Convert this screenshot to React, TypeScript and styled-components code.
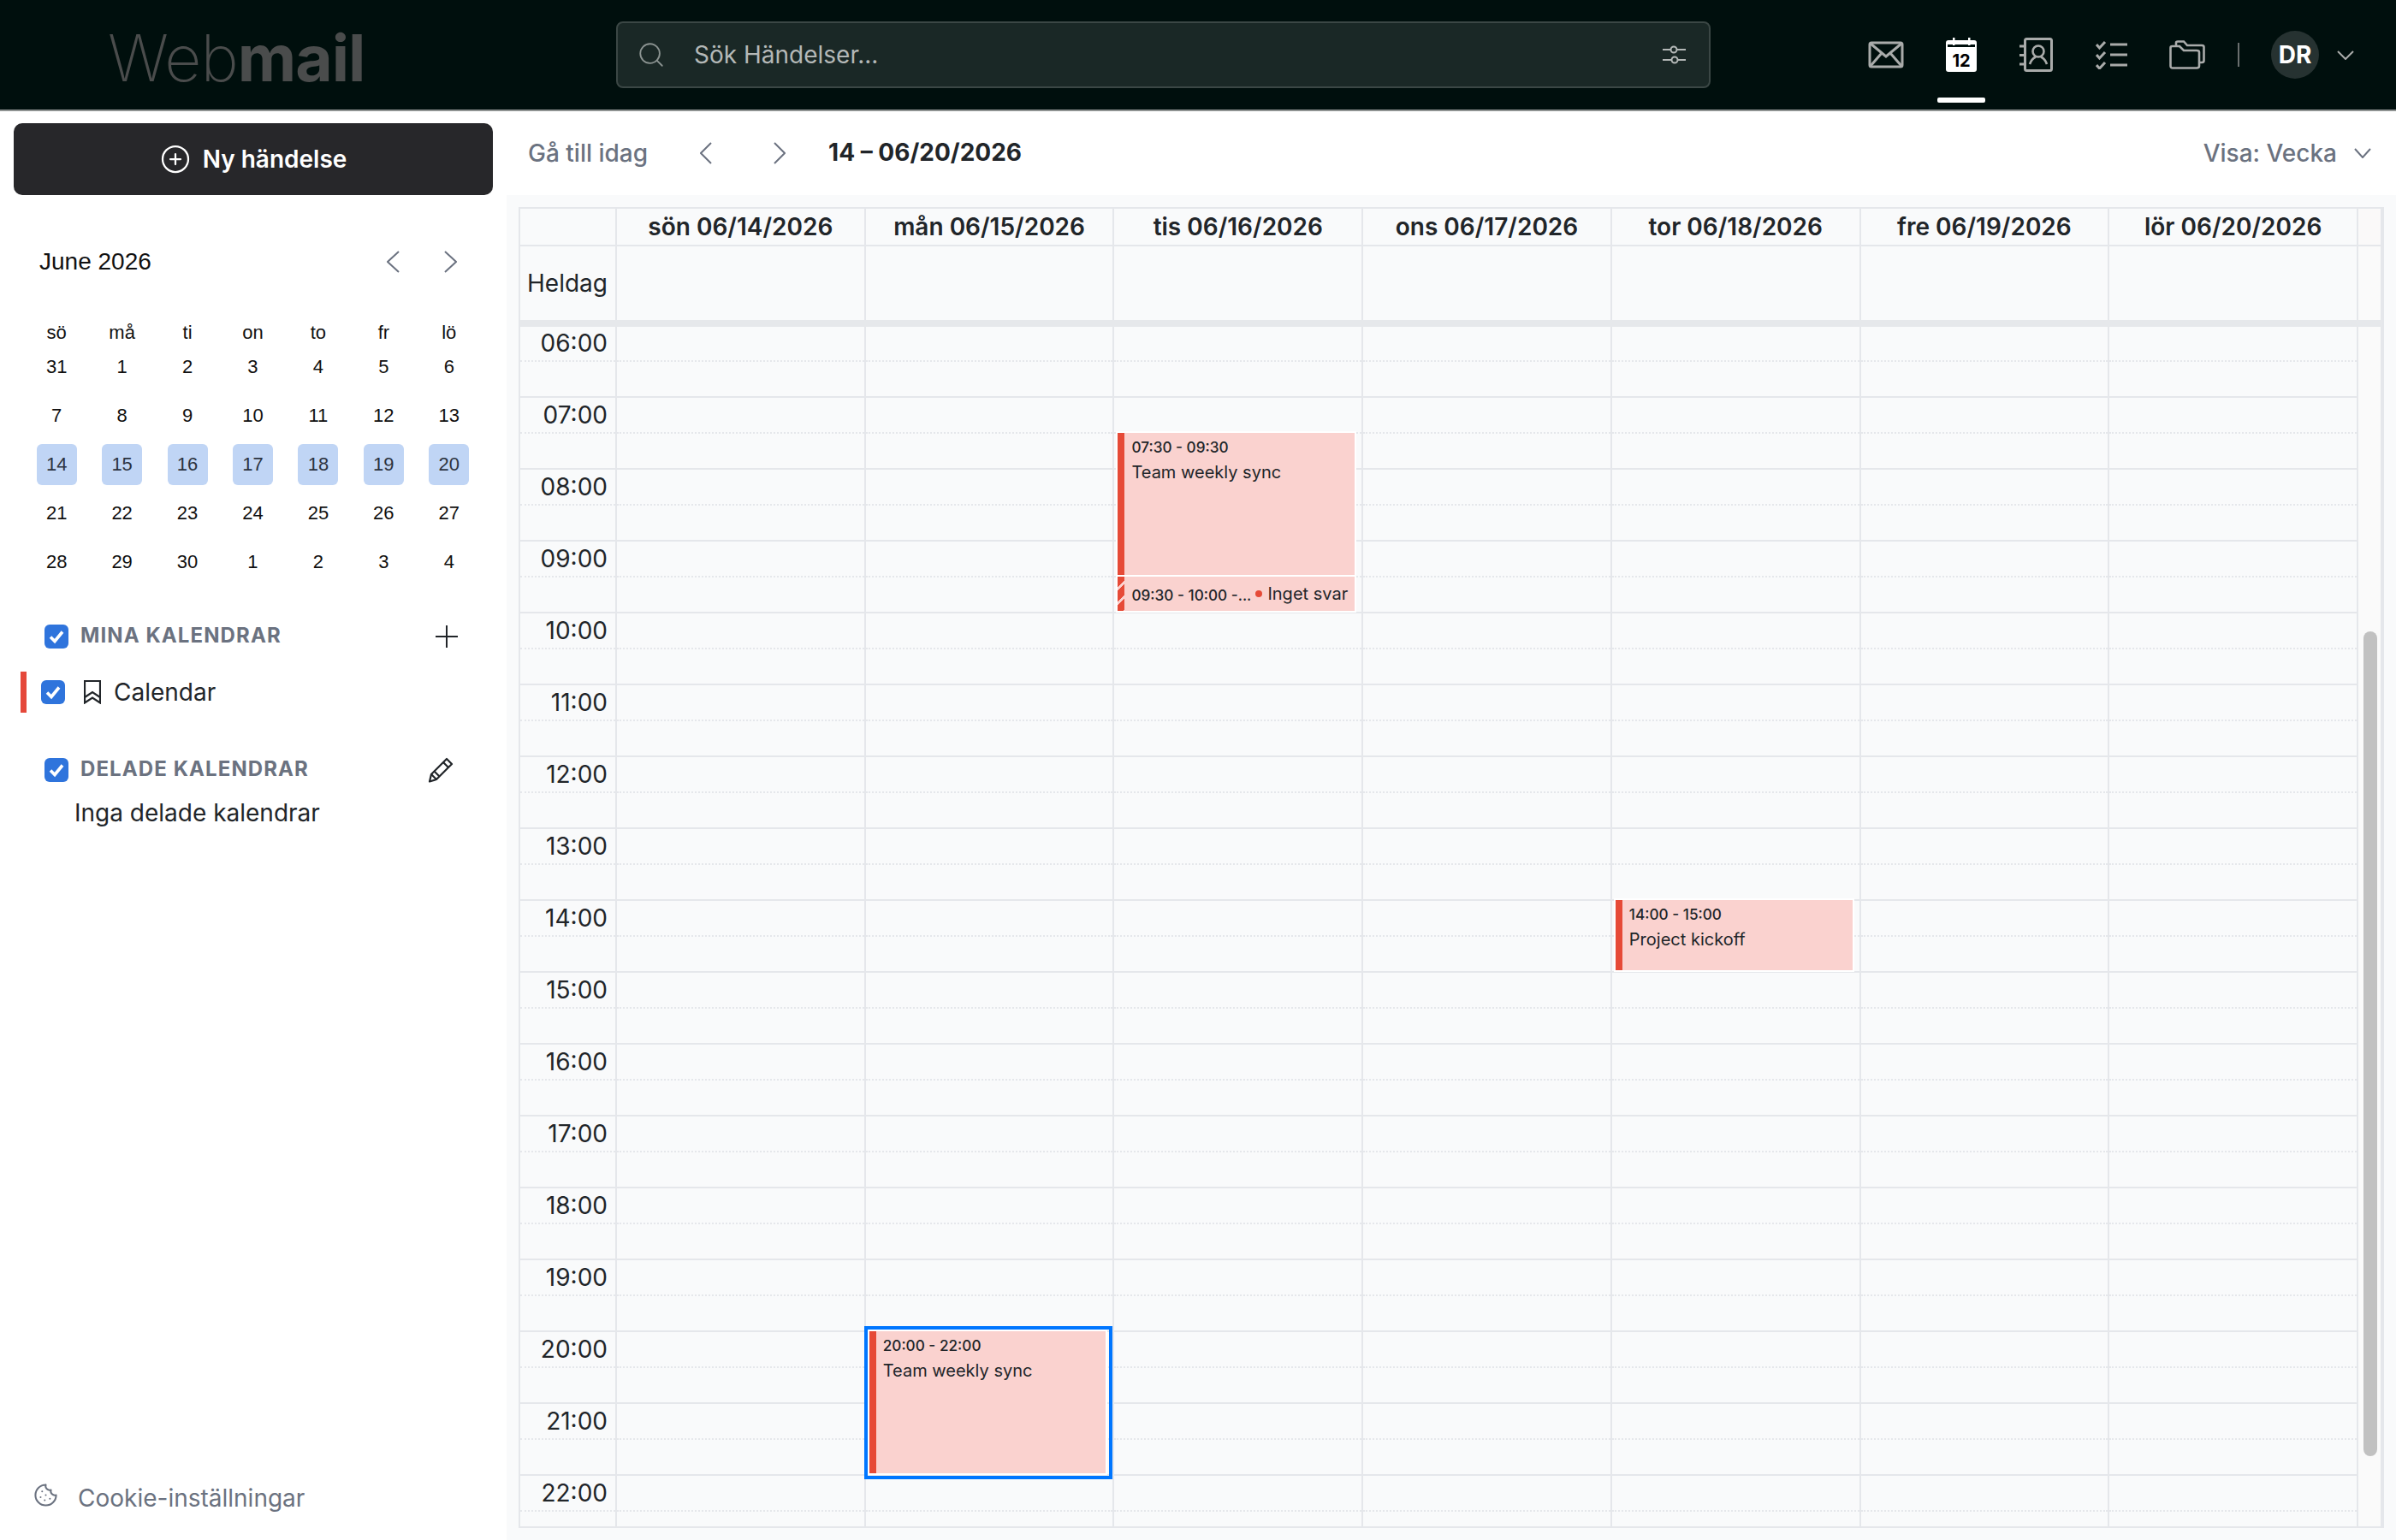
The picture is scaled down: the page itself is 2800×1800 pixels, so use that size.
import React from 'react';
import styled, { createGlobalStyle } from 'styled-components';
import { CirclePlus, Cookie, Search } from 'lucide-react';

const GlobalStyle = createGlobalStyle`
    html, body {
        margin: 0;
        padding: 0;
        background: #fff;
    }
    * {
        box-sizing: border-box;
    }
    body {
        font-family: Inter, 'Noto Sans', sans-serif;
        color: #212529;
    }
`;

const HOURS = ['06', '07', '08', '09', '10', '11', '12', '13', '14', '15', '16', '17', '18', '19', '20', '21', '22'];
const DAYS = [
    'sön 06/14/2026',
    'mån 06/15/2026',
    'tis 06/16/2026',
    'ons 06/17/2026',
    'tor 06/18/2026',
    'fre 06/19/2026',
    'lör 06/20/2026',
];
const WEEKDAYS = ['sö', 'må', 'ti', 'on', 'to', 'fr', 'lö'];
const MONTH_DAYS = [
    31, 1, 2, 3, 4, 5, 6, 7, 8, 9, 10, 11, 12, 13, 14, 15, 16, 17, 18, 19, 20, 21, 22, 23, 24, 25, 26, 27, 28, 29, 30, 1, 2, 3, 4,
];

const HOUR_HEIGHT = 84;

type CalEvent = {
    day: number;
    start: number;
    end: number;
    time: string;
    title?: string;
    pending?: boolean;
    selected?: boolean;
};

const EVENTS: CalEvent[] = [
    { day: 2, start: 7.5, end: 9.5, time: '07:30 - 09:30', title: 'Team weekly sync' },
    { day: 2, start: 9.5, end: 10, time: '09:30 - 10:00 -...', pending: true },
    { day: 4, start: 14, end: 15, time: '14:00 - 15:00', title: 'Project kickoff' },
    { day: 1, start: 20, end: 22, time: '20:00 - 22:00', title: 'Team weekly sync', selected: true },
];

const Chevron: React.FC<{ dir: 'left' | 'right' | 'down'; w: number; h: number; color: string }> = ({ dir, w, h, color }) => {
    const d = dir === 'left' ? `M${w - 1} 1 L1 ${h / 2} L${w - 1} ${h - 1}` : dir === 'right' ? `M1 1 L${w - 1} ${h / 2} L1 ${h - 1}` : `M1 1 L${w / 2} ${h - 1} L${w - 1} 1`;
    return (
        <svg width={w} height={h} viewBox={`0 0 ${w} ${h}`} fill="none" stroke={color} strokeWidth="2">
            <path d={d} />
        </svg>
    );
};

const CheckBox: React.FC = () => (
    <CheckBoxBox>
        <svg width="20" height="18" viewBox="0 0 20 18" fill="none" stroke="#fff" strokeWidth="3.6">
            <path d="M3 9.5 L8 14.5 L17 3.5" />
        </svg>
    </CheckBoxBox>
);

const App: React.FC = () => {
    return (
        <>
            <GlobalStyle />
            <Page>
                <Header>
                    <Logo>
                        <LogoThin>Web</LogoThin>
                        <LogoBold>mail</LogoBold>
                    </Logo>
                    <SearchBar>
                        <Search size={34} color="#8b9391" strokeWidth={1.3} />
                        <SearchText>Sök Händelser...</SearchText>
                        <svg width="28" height="24" viewBox="0 0 28 24" fill="none" stroke="#b4b8b7" strokeWidth="2">
                            <path d="M0 6 H9 M17 6 H27 M0 18 H10 M18 18 H27" />
                            <circle cx="13" cy="6" r="3.5" />
                            <circle cx="14" cy="18" r="3.5" />
                        </svg>
                    </SearchBar>
                    <NavIcons>
                        <NavItem>
                            <svg width="42" height="32" viewBox="0 0 42 32" fill="none" stroke="#a9abaa" strokeWidth="3">
                                <rect x="2" y="2" width="38" height="28" rx="2" />
                                <path d="M3 3 L21 18 L39 3 M3 29 L16 14 M39 29 L26 14" />
                            </svg>
                        </NavItem>
                        <NavItem $active>
                            <svg width="36" height="40" viewBox="0 0 36 40">
                                <rect x="0" y="3" width="36" height="37" rx="3" fill="#fff" />
                                <rect x="2" y="8" width="32" height="3" fill="#000f0d" />
                                <rect x="8" y="0" width="2.5" height="9" fill="#fff" />
                                <rect x="26" y="0" width="2.5" height="9" fill="#fff" />
                                <text x="18" y="34" textAnchor="middle" fontFamily="Inter, sans-serif" fontWeight="700" fontSize="20" fill="#000">
                                    12
                                </text>
                            </svg>
                        </NavItem>
                        <NavItem>
                            <svg width="40" height="40" viewBox="0 0 40 40" fill="none" stroke="#a9abaa" strokeWidth="3">
                                <rect x="6.5" y="1.5" width="31" height="37" rx="2" />
                                <path d="M0 10 H5 M0 20.5 H5 M0 31 H5" />
                                <circle cx="22" cy="16" r="6.5" strokeWidth="2.6" />
                                <path d="M12 31 C14 25 17 23.5 19 22.5 M32 31 C30 25 27 23.5 25 22.5" strokeWidth="2.6" />
                            </svg>
                        </NavItem>
                        <NavItem>
                            <svg width="38" height="34" viewBox="0 0 38 34" fill="none" stroke="#a9abaa" strokeWidth="3">
                                <path d="M1 5 L4.5 9 L11 2 M1 17 L4.5 21 L11 14 M1 29 L4.5 33 L11 26" />
                                <path d="M17 5 H37 M17 17 H37 M17 29 H37" />
                            </svg>
                        </NavItem>
                        <NavItem>
                            <svg width="42" height="34" viewBox="0 0 42 34" fill="none" stroke="#a9abaa" strokeWidth="2.6">
                                <path d="M8 6 V3 Q8 1.5 10 1.5 H17 L21 6 H38 Q40.500 6 40.500 8 V24 Q40.500 26 38 26 H35" />
                                <path d="M1.500 9 Q1.500 7 3.500 7 H12 L17 12 H32 Q35 12 35 14 V30 Q35 32.500 32 32.500 H4 Q1.500 32.500 1.500 30 Z" />
                            </svg>
                        </NavItem>
                    </NavIcons>
                    <NavDivider />
                    <Avatar>DR</Avatar>
                    <Chevron dir="down" w={20} h={11} color="#a9abaa" />
                </Header>
                <Body>
                    <Sidebar>
                        <NewButton>
                            <CirclePlus size={36} strokeWidth={1.5} />
                            Ny händelse
                        </NewButton>
                        <MonthHead>
                            <MonthTitle>June 2026</MonthTitle>
                            <MonthNav>
                                <Chevron dir="left" w={15} h={26} color="#6b7280" />
                                <Chevron dir="right" w={15} h={26} color="#6b7280" />
                            </MonthNav>
                        </MonthHead>
                        <MonthGrid>
                            {WEEKDAYS.map(d => (
                                <WeekdayCell key={d}>{d}</WeekdayCell>
                            ))}
                            {MONTH_DAYS.map((d, i) => (
                                <DayCell key={i}>
                                    <DayMark $selected={i >= 14 && i <= 20}>{d}</DayMark>
                                </DayCell>
                            ))}
                        </MonthGrid>
                        <SectionHead $first>
                            <SectionLeft>
                                <CheckBox />
                                <SectionTitle>MINA KALENDRAR</SectionTitle>
                            </SectionLeft>
                            <svg width="28" height="28" viewBox="0 0 28 28" fill="none" stroke="#212529" strokeWidth="2">
                                <path d="M14 1 V27 M1 14 H27" />
                            </svg>
                        </SectionHead>
                        <CalendarRow>
                            <ColorBar />
                            <CheckBox />
                            <svg width="20" height="28" viewBox="0 0 20 28" fill="none" stroke="#212529" strokeWidth="2.2">
                                <path d="M1 1 H19 V26.500 L10 20.500 L1 26.500 Z" />
                                <path d="M1 20 L10 14 L19 20" />
                            </svg>
                            <CalendarName>Calendar</CalendarName>
                        </CalendarRow>
                        <SectionHead>
                            <SectionLeft>
                                <CheckBox />
                                <SectionTitle>DELADE KALENDRAR</SectionTitle>
                            </SectionLeft>
                            <PencilWrap>
                                <svg width="30" height="30" viewBox="0 0 30 30" fill="none" stroke="#212529" strokeWidth="2.2" strokeLinejoin="round">
                                    <path d="M22 2 L28 8 L10 26 L2 28.500 L4 20 Z" />
                                    <path d="M18 6 L24 12 M4 20 L10 26 M7.500 16.500 L13.500 22.500" />
                                </svg>
                            </PencilWrap>
                        </SectionHead>
                        <EmptyText>Inga delade kalendrar</EmptyText>
                        <CookieRow>
                            <CookieIcon>
                                <Cookie size={29} strokeWidth={1.7} color="#6b7280" />
                            </CookieIcon>
                            <CookieText>Cookie-inställningar</CookieText>
                        </CookieRow>
                    </Sidebar>
                    <Main>
                        <Toolbar>
                            <TodayText>Gå till idag</TodayText>
                            <WeekNav>
                                <Chevron dir="left" w={14} h={26} color="#6b7280" />
                                <Chevron dir="right" w={14} h={26} color="#6b7280" />
                            </WeekNav>
                            <RangeText>14 – 06/20/2026</RangeText>
                            <ViewSelect>
                                Visa: Vecka
                                <Chevron dir="down" w={20} h={12} color="#6b7280" />
                            </ViewSelect>
                        </Toolbar>
                        <CalendarArea>
                            <Table>
                                <HeaderRow>
                                    <Corner />
                                    {DAYS.map(d => (
                                        <DayHead key={d}>{d}</DayHead>
                                    ))}
                                    <GutterHead />
                                </HeaderRow>
                                <AllDayRow>
                                    <AllDayLabel>Heldag</AllDayLabel>
                                    {DAYS.map(d => (
                                        <AllDayCell key={d} />
                                    ))}
                                    <GutterAllDay />
                                </AllDayRow>
                                <TimeScroll>
                                    <TimeGrid>
                                        <TimeCol>
                                            {HOURS.map(h => (
                                                <React.Fragment key={h}>
                                                    <HalfCell>
                                                        <TimeLabel>{h}:00</TimeLabel>
                                                    </HalfCell>
                                                    <HalfCell $hour />
                                                </React.Fragment>
                                            ))}
                                        </TimeCol>
                                        {DAYS.map((d, day) => (
                                            <DayCol key={d}>
                                                {HOURS.map(h => (
                                                    <React.Fragment key={h}>
                                                        <HalfCell />
                                                        <HalfCell $hour />
                                                    </React.Fragment>
                                                ))}
                                                {EVENTS.filter(e => e.day === day).map(e => (
                                                    <EventBox
                                                        key={e.time}
                                                        $selected={e.selected}
                                                        style={{
                                                            top: (e.start - 6) * HOUR_HEIGHT - 1,
                                                            height: (e.end - e.start) * HOUR_HEIGHT - 2,
                                                        }}>
                                                        <EventBar $pending={e.pending} />
                                                        {e.pending ? (
                                                            <PendingBody>
                                                                <PendingTime>{e.time}</PendingTime>
                                                                <PendingDot />
                                                                <PendingText>Inget svar</PendingText>
                                                            </PendingBody>
                                                        ) : (
                                                            <EventBody>
                                                                <EventTime>{e.time}</EventTime>
                                                                <EventTitle>{e.title}</EventTitle>
                                                            </EventBody>
                                                        )}
                                                    </EventBox>
                                                ))}
                                            </DayCol>
                                        ))}
                                        <Gutter>
                                            <Thumb />
                                        </Gutter>
                                    </TimeGrid>
                                </TimeScroll>
                            </Table>
                        </CalendarArea>
                    </Main>
                </Body>
            </Page>
        </>
    );
};

const Page = styled.div`
    width: 2800px;
    height: 1800px;
    display: flex;
    flex-direction: column;
    overflow: hidden;
`;

const Header = styled.header`
    height: 130px;
    flex-shrink: 0;
    display: flex;
    align-items: center;
    background: #000f0d;
    border-bottom: 2px solid #8f9392;
`;

const Logo = styled.div`
    width: 720px;
    padding: 6px 0 0 126px;
    font-size: 75px;
    line-height: 1;
    color: #4a4c4c;
    letter-spacing: -1px;
`;

const LogoThin = styled.span`
    font-weight: 200;
`;

const LogoBold = styled.span`
    font-weight: 700;
`;

const SearchBar = styled.div`
    width: 1279px;
    height: 78px;
    display: flex;
    align-items: center;
    padding: 0 26px 0 22px;
    background: #1a2826;
    border: 2px solid #3b4745;
    border-radius: 8px;
`;

const SearchText = styled.span`
    flex: 1;
    margin-left: 33px;
    font-size: 28px;
    color: #b4b8b7;
`;

const NavIcons = styled.div`
    display: flex;
    align-items: center;
    margin-left: 177px;
    gap: 32px;
`;

const NavItem = styled.div<{ $active?: boolean }>`
    position: relative;
    width: 56px;
    height: 128px;
    display: flex;
    align-items: center;
    justify-content: center;
    padding-bottom: 0;
    &::after {
        content: '';
        display: ${p => (p.$active ? 'block' : 'none')};
        position: absolute;
        left: 0;
        right: 0;
        bottom: 8px;
        height: 6px;
        border-radius: 2px;
        background: #fff;
    }
`;

const NavDivider = styled.div`
    width: 2px;
    height: 28px;
    margin-left: 31px;
    background: #6a6f6e;
`;

const Avatar = styled.div`
    width: 56px;
    height: 56px;
    margin: 0 21px 0 37px;
    border-radius: 50%;
    background: #263231;
    color: #fff;
    font-size: 28px;
    font-weight: 700;
    display: flex;
    align-items: center;
    justify-content: center;
`;

const Body = styled.div`
    flex: 1;
    display: flex;
    min-height: 0;
`;

const Sidebar = styled.aside`
    width: 592px;
    flex-shrink: 0;
    display: flex;
    flex-direction: column;
    background: #fff;
`;

const NewButton = styled.div`
    width: 560px;
    height: 84px;
    margin: 14px 0 0 16px;
    flex-shrink: 0;
    display: flex;
    align-items: center;
    justify-content: center;
    gap: 14px;
    background: #27272a;
    color: #fff;
    border-radius: 10px;
    font-size: 28px;
    font-weight: 600;
`;

const MonthHead = styled.div`
    height: 50px;
    margin-top: 53px;
    padding: 0 58px 0 46px;
    display: flex;
    align-items: center;
    justify-content: space-between;
`;

const MonthTitle = styled.div`
    font-family: 'Liberation Sans', Arial, sans-serif;
    font-size: 28px;
    color: #111;
`;

const MonthNav = styled.div`
    display: flex;
    align-items: center;
    gap: 52px;
`;

const MonthGrid = styled.div`
    display: grid;
    width: 535px;
    margin: 46px 0 0 28px;
    grid-template-columns: repeat(7, 1fr);
    grid-template-rows: 24px;
    grid-auto-rows: 56.8px;
    font-family: 'Liberation Sans', Arial, sans-serif;
    font-size: 22px;
    color: #111;
`;

const WeekdayCell = styled.div`
    display: flex;
    align-items: center;
    justify-content: center;
`;

const DayCell = styled.div`
    display: flex;
    align-items: center;
    justify-content: center;
`;

const DayMark = styled.div<{ $selected?: boolean }>`
    width: 47px;
    height: 48px;
    display: flex;
    align-items: center;
    justify-content: center;
    border-radius: 6px;
    background: ${p => (p.$selected ? '#c0d5f5' : 'transparent')};
    color: ${p => (p.$selected ? '#2c3340' : '#111')};
`;

const SectionHead = styled.div<{ $first?: boolean }>`
    display: flex;
    align-items: center;
    justify-content: space-between;
    height: 28px;
    margin-top: ${p => (p.$first ? '45px' : '53px')};
    padding: 0 56px 0 52px;
`;

const SectionLeft = styled.div`
    display: flex;
    align-items: center;
    gap: 14px;
`;

const SectionTitle = styled.div`
    font-size: 24px;
    font-weight: 700;
    letter-spacing: 1.1px;
    color: #6b7280;
    margin-bottom: 3px;
`;

const CheckBoxBox = styled.div`
    width: 28px;
    height: 28px;
    flex-shrink: 0;
    display: flex;
    align-items: center;
    justify-content: center;
    border-radius: 6px;
    background: #2f74dc;
`;

const PencilWrap = styled.div`
    display: flex;
    margin-right: 6px;
`;

const CalendarRow = styled.div`
    height: 48px;
    margin-top: 27px;
    padding-left: 24px;
    display: flex;
    align-items: center;
    svg {
        margin-left: 22px;
    }
    ${CheckBoxBox} svg {
        margin-left: 0;
    }
`;

const ColorBar = styled.div`
    width: 7px;
    height: 48px;
    margin-right: 17px;
    background: #e5483a;
`;

const CalendarName = styled.div`
    margin-left: 15px;
    font-size: 28px;
`;

const EmptyText = styled.div`
    margin: 16px 0 0 87px;
    line-height: 40px;
    font-size: 28px;
`;

const CookieRow = styled.div`
    margin-top: auto;
    padding: 0 0 29px 39px;
    display: flex;
    align-items: center;
    gap: 23px;
`;

const CookieIcon = styled.div`
    display: flex;
    margin-bottom: 8px;
`;

const CookieText = styled.div`
    font-size: 28px;
    line-height: 40px;
    color: #6b7280;
`;

const Main = styled.main`
    flex: 1;
    min-width: 0;
    display: flex;
    flex-direction: column;
`;

const Toolbar = styled.div`
    height: 98px;
    flex-shrink: 0;
    display: flex;
    align-items: center;
    padding: 0 29px 0 25px;
    font-size: 28px;
`;

const TodayText = styled.div`
    font-weight: 500;
    color: #6b7280;
`;

const WeekNav = styled.div`
    display: flex;
    align-items: center;
    gap: 72px;
    margin: 0 50px 0 61px;
`;

const RangeText = styled.div`
    font-weight: 700;
    color: #212529;
    margin-bottom: 2px;
`;

const ViewSelect = styled.div`
    margin-left: auto;
    display: flex;
    align-items: center;
    gap: 20px;
    font-weight: 500;
    color: #6b7280;
`;

const CalendarArea = styled.div`
    flex: 1;
    min-height: 0;
    padding: 14px;
    background: #f9fafb;
`;

const Table = styled.div`
    height: 100%;
    display: flex;
    flex-direction: column;
    border: 2px solid #e5e7eb;
`;

const HeaderRow = styled.div`
    height: 44px;
    flex-shrink: 0;
    display: grid;
    grid-template-columns: 113px repeat(7, 1fr) 28px;
    border-bottom: 2px solid #e5e7eb;
`;

const Corner = styled.div`
    border-right: 2px solid #e5e7eb;
`;

const DayHead = styled.div`
    display: flex;
    align-items: center;
    justify-content: center;
    border-right: 2px solid #e5e7eb;
    font-size: 28px;
    font-weight: 600;
    white-space: nowrap;
`;

const GutterHead = styled.div`
    background: #faf9f9;
    border-right: 2px solid #e5e7eb;
`;

const AllDayRow = styled.div`
    height: 94px;
    flex-shrink: 0;
    display: grid;
    grid-template-columns: 113px repeat(7, 1fr) 28px;
    border-bottom: 8px solid #e6e8eb;
`;

const AllDayLabel = styled.div`
    display: flex;
    align-items: center;
    justify-content: flex-end;
    padding: 0 9px 0 0;
    border-right: 2px solid #e5e7eb;
    font-size: 28px;
`;

const AllDayCell = styled.div`
    border-right: 2px solid #e5e7eb;
`;

const GutterAllDay = styled.div`
    background: #fafafa;
    border-right: 2px solid #e5e7eb;
`;

const TimeScroll = styled.div`
    flex: 1;
    min-height: 0;
    overflow: hidden;
`;

const TimeGrid = styled.div`
    display: grid;
    grid-template-columns: 113px repeat(7, 1fr) 28px;
    margin-top: -1px;
`;

const TimeCol = styled.div`
    border-right: 2px solid #e5e7eb;
`;

const DayCol = styled.div`
    position: relative;
    border-right: 2px solid #e5e7eb;
`;

const HalfCell = styled.div<{ $hour?: boolean }>`
    height: 42px;
    display: flex;
    align-items: center;
    justify-content: flex-end;
    border-bottom: 2px ${p => (p.$hour ? 'solid' : 'dotted')} #e5e7eb;
`;

const TimeLabel = styled.div`
    padding-right: 9px;
    font-size: 28px;
    line-height: 34px;
`;

const Gutter = styled.div`
    background: #fafafa;
    border-right: 2px solid #e5e7eb;
    padding: 357px 4px 0 6px;
`;

const Thumb = styled.div`
    width: 16px;
    height: 964px;
    border-radius: 8px;
    background: #c1c1c1;
`;

const EventBox = styled.div<{ $selected?: boolean }>`
    position: absolute;
    left: 4px;
    right: 8px;
    display: flex;
    background: #fad2cf;
    box-shadow: 0 0 0 2px #fff;
    &::after {
        content: '';
        display: ${p => (p.$selected ? 'block' : 'none')};
        position: absolute;
        inset: -6px -8px -7px -6px;
        border: 4px solid #0076ff;
    }
`;

const EventBar = styled.div<{ $pending?: boolean }>`
    width: 8px;
    flex-shrink: 0;
    background: ${p =>
        p.$pending
            ? 'repeating-linear-gradient(135deg, #e64a37 0, #e64a37 9px, #fad2cf 9px, #fad2cf 12px)'
            : '#e64a37'};
`;

const EventBody = styled.div`
    flex: 1;
    min-width: 0;
    padding: 5px 0 0 8px;
`;

const EventTime = styled.div`
    font-size: 17.2px;
    font-weight: 500;
    line-height: 24px;
    color: #212529;
`;

const EventTitle = styled.div`
    margin-top: 5px;
    font-size: 20px;
    line-height: 24px;
    color: #212529;
`;

const PendingBody = styled.div`
    flex: 1;
    min-width: 0;
    display: flex;
    align-items: center;
    padding: 0 0 0 8px;
`;

const PendingTime = styled.div`
    width: 142px;
    flex-shrink: 0;
    padding-top: 2px;
    white-space: nowrap;
    font-size: 17.2px;
    font-weight: 500;
    color: #212529;
`;

const PendingDot = styled.div`
    width: 8px;
    height: 8px;
    margin: 0 6px 0 3px;
    flex-shrink: 0;
    border-radius: 50%;
    background: #e64a37;
`;

const PendingText = styled.div`
    font-size: 20px;
    white-space: nowrap;
    color: #212529;
`;

export default App;
